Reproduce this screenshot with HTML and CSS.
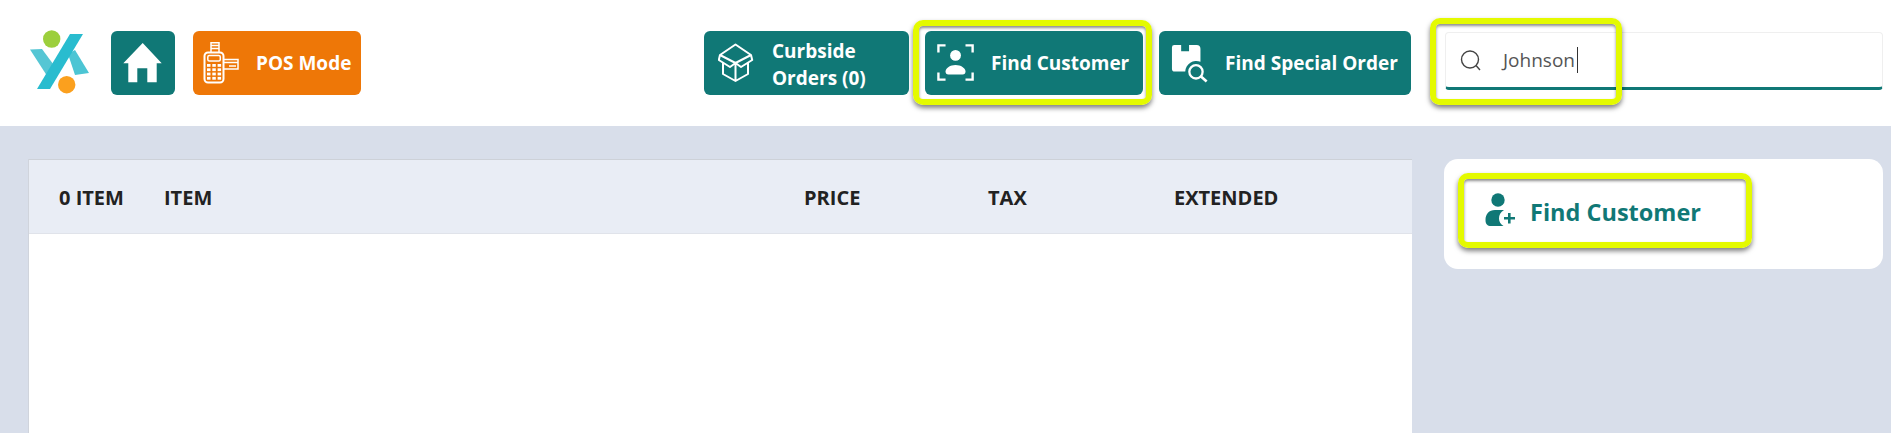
FILE: index.html
```html
<!DOCTYPE html>
<html lang="en">
<head>
    <meta charset="UTF-8">
    <title>Find Customer</title>
    <link rel="stylesheet" href="styles.css">
</head>
<body>
    <header class="topbar">
        <svg class="logo" viewBox="0 0 60 66" aria-label="Logo">
            <polygon points="0,19.500 12,19 29,42 21,52" fill="#55c6d4"/>
            <polygon points="38,24 45,20 59,43 45,45" fill="#4cc5d4"/>
            <polygon points="40,4 53,4 20,59 7,59" fill="#29bccf"/>
            <circle cx="21.700" cy="9" r="8.700" fill="#9ccf3c"/>
            <circle cx="36.700" cy="54.700" r="8.700" fill="#fba01e"/>
        </svg>
        <button class="btn btn-home" aria-label="Home">
            <svg class="home-icon" viewBox="0 0 40 40"><path d="M19.700 0 L38.700 20.300 H33.700 V39.300 H24.300 V25.300 H14.300 V39.300 H5.300 V20.300 H0.300 Z" fill="#fff"/></svg>
        </button>
        <button class="btn btn-pos">
            <svg class="pos-icon" viewBox="0 0 36 42" fill="none" stroke="#fff" stroke-width="1.500">
                <path d="M8 10 V0.800 H16 V10 M8 3.500 H16 M8 6.500 H16"/>
                <rect x="1.500" y="10.500" width="19" height="30" rx="3.500" stroke-width="2"/>
                <rect x="4.800" y="13.500" width="12.500" height="5.500" rx="1.500"/>
                <g fill="#fff" stroke="none">
                    <rect x="4" y="22" width="3.500" height="2.800"/>
                    <rect x="9.300" y="22" width="3.500" height="2.800"/>
                    <rect x="14.600" y="22" width="3.500" height="2.800"/>
                    <rect x="4" y="26.300" width="3.500" height="2.800"/>
                    <rect x="9.300" y="26.300" width="3.500" height="2.800"/>
                    <rect x="14.600" y="26.300" width="3.500" height="2.800"/>
                    <rect x="4" y="30.600" width="3.500" height="2.800"/>
                    <rect x="9.300" y="30.600" width="3.500" height="2.800"/>
                    <rect x="14.600" y="30.600" width="3.500" height="2.800"/>
                    <rect x="4" y="34.900" width="3.500" height="2.800"/>
                    <rect x="9.300" y="34.900" width="3.500" height="2.800"/>
                    <rect x="14.600" y="34.900" width="3.500" height="2.800"/>
                </g>
                <path d="M21 17.500 H35 V27 H21 M21 20.500 H35 M26 24 H33"/>
            </svg>
            <span>POS Mode</span>
        </button>

        <div class="actions">
            <button class="btn btn-curbside">
                <svg class="action-icon" viewBox="0 0 38 40" fill="none" stroke="#fff" stroke-width="2" stroke-linejoin="round">
                    <path d="M17.500 1.500 L33 12 L17.500 20 L2 12 Z"/>
                    <path d="M2 12 L0.800 17 L12 24 L17.500 20 L23 24 L34.200 17 L33 12"/>
                    <path d="M5 19 V31 L17.500 38 L30 31 V19 M17.500 22 V38"/>
                </svg>
                <span class="two-lines">Curbside<br>Orders (0)</span>
            </button>
            <button class="btn btn-find">
                <svg class="action-icon" viewBox="0 0 40 40" fill="none" stroke="#fff" stroke-width="2.500">
                    <path d="M1.500 9 V1.500 H9 M30 1.500 H37.500 V9 M1.500 30 V37.500 H9 M30 37.500 H37.500 V30"/>
                    <circle cx="19.500" cy="12" r="5.700" fill="#fff" stroke="none"/>
                    <path d="M9 29 C9 25 14 22 19.500 22 C25 22 30 25 30 29 Q30 32 27 32 H12 Q9 32 9 29 Z" fill="#fff" stroke="none"/>
                </svg>
                <span>Find Customer</span>
                <i class="highlight highlight-find"></i>
            </button>
            <button class="btn btn-special">
                <svg class="action-icon" viewBox="0 0 40 40">
                    <path d="M3.500 1 H10.700 V7.500 H19 V1 H27 Q31 1 31 5 V18.800 A11.500 11.500 0 0 0 15 29 H4 Q1 29 1 26 V3.500 Q1 1 3.500 1 Z" fill="#fff"/>
                    <circle cx="26.300" cy="29.300" r="7" fill="none" stroke="#fff" stroke-width="2.400"/>
                    <path d="M31.300 34 L37.500 39.500" stroke="#fff" stroke-width="2.800"/>
                </svg>
                <span>Find Special Order</span>
            </button>
            <div class="search">
                <svg class="search-icon" viewBox="0 0 22 22" fill="none" stroke="#444" stroke-width="1.400">
                    <circle cx="10" cy="9.500" r="8.500"/>
                    <path d="M16 15.500 L20 20"/>
                </svg>
                <span class="search-text">Johnson</span><span class="caret"></span>
                <i class="highlight highlight-search"></i>
            </div>
        </div>
    </header>

    <main class="content">
        <section class="items">
            <div class="items-head">
                <span>0 ITEM</span>
                <span>ITEM</span>
                <span>PRICE</span>
                <span>TAX</span>
                <span>EXTENDED</span>
            </div>
        </section>
        <aside class="side">
            <button class="find-link">
                <svg class="find-link-icon" viewBox="0 0 31 34">
                    <circle cx="14" cy="8" r="6.700" fill="#107876"/>
                    <path d="M1.500 28 C1.500 22 5 18 11 18 H20 C16.500 20 15 23 15 26.500 C15 29.500 16.500 32.500 19.500 34 H7 C3.500 34 1.500 32 1.500 28 Z" fill="#107876"/>
                    <path d="M20 26.300 H31 M25.300 21 V31.500" stroke="#107876" stroke-width="2.600"/>
                </svg>
                <span>Find Customer</span>
                <i class="highlight highlight-link"></i>
            </button>
        </aside>
    </main>
</body>
</html>
```

FILE: styles.css
```css
html, body {
    height: 100%;
    margin: 0;
    font-family: "Open Sans", "Noto Sans", sans-serif;
    background-color: #d8deea;
    color: #222;
    overflow: hidden;
}

body {
    display: flex;
    flex-direction: column;
}

button {
    font-family: inherit;
    border: none;
    cursor: pointer;
}

.topbar {
    display: flex;
    align-items: center;
    height: 126px;
    box-sizing: border-box;
    padding: 0 8px 0 30px;
    background-color: #fff;
}

.logo {
    width: 60px;
    height: 66px;
    margin-right: 21px;
}

.btn {
    position: relative;
    display: flex;
    align-items: center;
    height: 64px;
    padding: 0;
    border-radius: 6px;
    background-color: #107876;
    color: #fff;
    font-size: 19px;
    font-weight: 700;
    line-height: 27px;
    text-align: left;
}

.two-lines {
    margin-top: 4px;
}

.btn-home {
    justify-content: center;
    width: 64px;
    margin-right: 18px;
}

.home-icon {
    width: 40px;
    height: 40px;
}

.btn-pos {
    width: 168px;
    padding-left: 10px;
    box-sizing: border-box;
    background-color: #ee7707;
}

.pos-icon {
    width: 36px;
    height: 42px;
    margin-right: 17px;
}

.actions {
    display: flex;
    align-items: center;
    margin-left: auto;
}

.action-icon {
    width: 38px;
    height: 40px;
    flex-shrink: 0;
}

.btn-curbside {
    width: 205px;
    padding-left: 14px;
    margin-right: 16px;
    box-sizing: border-box;
}

.btn-curbside .action-icon {
    margin-right: 16px;
}

.btn-find {
    width: 218px;
    padding-left: 12px;
    margin-right: 16px;
    box-sizing: border-box;
}

.btn-find .action-icon {
    margin-right: 16px;
}

.btn-special {
    width: 252px;
    padding-left: 12px;
    margin-right: 34px;
    box-sizing: border-box;
}

.btn-special .action-icon {
    margin-right: 16px;
}

.search {
    position: relative;
    display: flex;
    align-items: center;
    width: 438px;
    height: 58px;
    box-sizing: border-box;
    padding-left: 14px;
    border: 1px solid #efefef;
    border-bottom: 3px solid #107876;
    border-radius: 4px;
    margin-top: -4px;
    font-size: 19px;
    color: #555;
}

.search-icon {
    width: 22px;
    height: 22px;
    margin-top: 2px;
    margin-right: 21px;
}

.caret {
    width: 1px;
    height: 26px;
    margin-left: 2px;
    background-color: #333;
}

/* yellow call-outs drawn over the controls */
.highlight {
    position: absolute;
    box-sizing: border-box;
    border: 6px solid #e4fa00;
    border-radius: 10px;
    box-shadow: 0 3px 5px rgba(0, 0, 0, 0.5), inset 0 2px 3px rgba(0, 0, 0, 0.45);
    pointer-events: none;
}

.highlight-find {
    top: -11px;
    bottom: -10px;
    left: -12px;
    right: -9px;
}

.highlight-search {
    top: -15px;
    bottom: -18px;
    left: -16px;
    width: 192px;
}

.highlight-link {
    top: -19px;
    bottom: -22px;
    left: -26px;
    right: -51px;
}

.content {
    flex: 1;
    display: flex;
    min-height: 0;
    padding: 33px 8px 0 28px;
}

.items {
    width: 1383px;
    margin-right: 32px;
    background-color: #fff;
    border-left: 1px solid #d0d4dc;
}

.items-head {
    display: grid;
    grid-template-columns: 105px 640px 184px 186px 1fr;
    align-items: center;
    height: 75px;
    box-sizing: border-box;
    padding: 2px 0 0 30px;
    background-color: #e9edf5;
    border-top: 1px solid #cdd1d8;
    border-bottom: 1px solid #e0e3ea;
    font-size: 20px;
    font-weight: 700;
}

.side {
    flex: 1;
    height: 110px;
    box-sizing: border-box;
    padding: 33px 0 0 40px;
    background-color: #fff;
    border-radius: 14px;
}

.find-link {
    position: relative;
    display: flex;
    align-items: center;
    height: 34px;
    padding: 0;
    background: none;
    color: #107876;
    font-size: 23.500px;
    font-weight: 700;
}

.find-link span {
    margin-top: 6px;
    line-height: 28px;
}

.find-link-icon {
    width: 31px;
    height: 34px;
    margin-right: 15px;
}
```
